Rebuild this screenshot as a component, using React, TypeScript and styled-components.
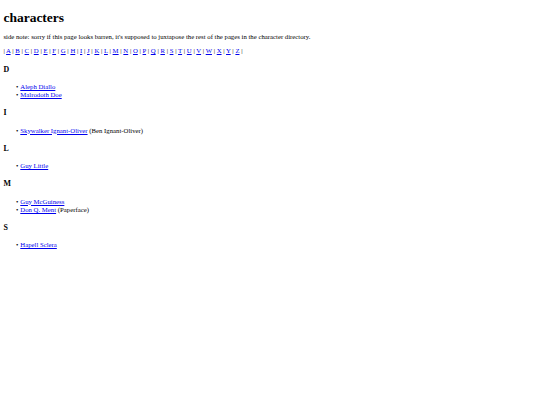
import React from "react";
import styled, { createGlobalStyle } from "styled-components";

const Global = createGlobalStyle`
  html, body { background: #fff; }
  body {
    margin: 3.4px;
    font-family: "Liberation Serif", "Times New Roman", serif;
    font-size: 6.75px;
    line-height: 8px;
    color: #000;
  }
`;

const Title = styled.h1`
  font-size: 13.5px;
  line-height: 15px;
  font-weight: bold;
  margin: 6.5px 0 8.5px;
`;

const Para = styled.p`
  margin: 6px 0;
`;

const Section = styled.h3`
  font-size: 7.9px;
  line-height: 9px;
  font-weight: bold;
  margin: 9.3px 0;
`;

const List = styled.ul`
  margin: 6px 0;
  padding-left: 16.9px;
  list-style: none;
`;

const Item = styled.li`
  &::before {
    content: "•";
    display: inline-block;
    width: 4.3px;
    margin-left: -4.3px;
  }
`;

const Link = styled.a`
  color: #0000ee;
  text-decoration: underline;
`;

const letters = "ABCDEFGHIJKLMNOPQRSTUVWXYZ".split("");

type Person = { name: string; alias?: string };
const groups: { letter: string; people: Person[] }[] = [
  { letter: "D", people: [{ name: "Aleph Diallo" }, { name: "Malrodoth Doe" }] },
  { letter: "I", people: [{ name: "Skywalker Ignant-Oliver", alias: "Ben Ignant-Oliver" }] },
  { letter: "L", people: [{ name: "Guy Little" }] },
  { letter: "M", people: [{ name: "Guy McGuiness" }, { name: "Don Q. Ment", alias: "Paperface" }] },
  { letter: "S", people: [{ name: "Hapell Sclera" }] },
];

export default function App() {
  return (
    <>
      <Global />
      <Title>characters</Title>
      <Para>
        side note: sorry if this page looks barren, it's supposed to juxtapose the rest of the pages in the character directory.
      </Para>
      <Para>
        |{" "}
        {letters.map((l) => (
          <React.Fragment key={l}>
            <Link href={`#${l}`}>{l}</Link> |{" "}
          </React.Fragment>
        ))}
      </Para>
      {groups.map((g) => (
        <React.Fragment key={g.letter}>
          <Section id={g.letter}>{g.letter}</Section>
          <List>
            {g.people.map((p) => (
              <Item key={p.name}>
                <Link href="#">{p.name}</Link>
                {p.alias ? ` (${p.alias})` : null}
              </Item>
            ))}
          </List>
        </React.Fragment>
      ))}
    </>
  );
}
